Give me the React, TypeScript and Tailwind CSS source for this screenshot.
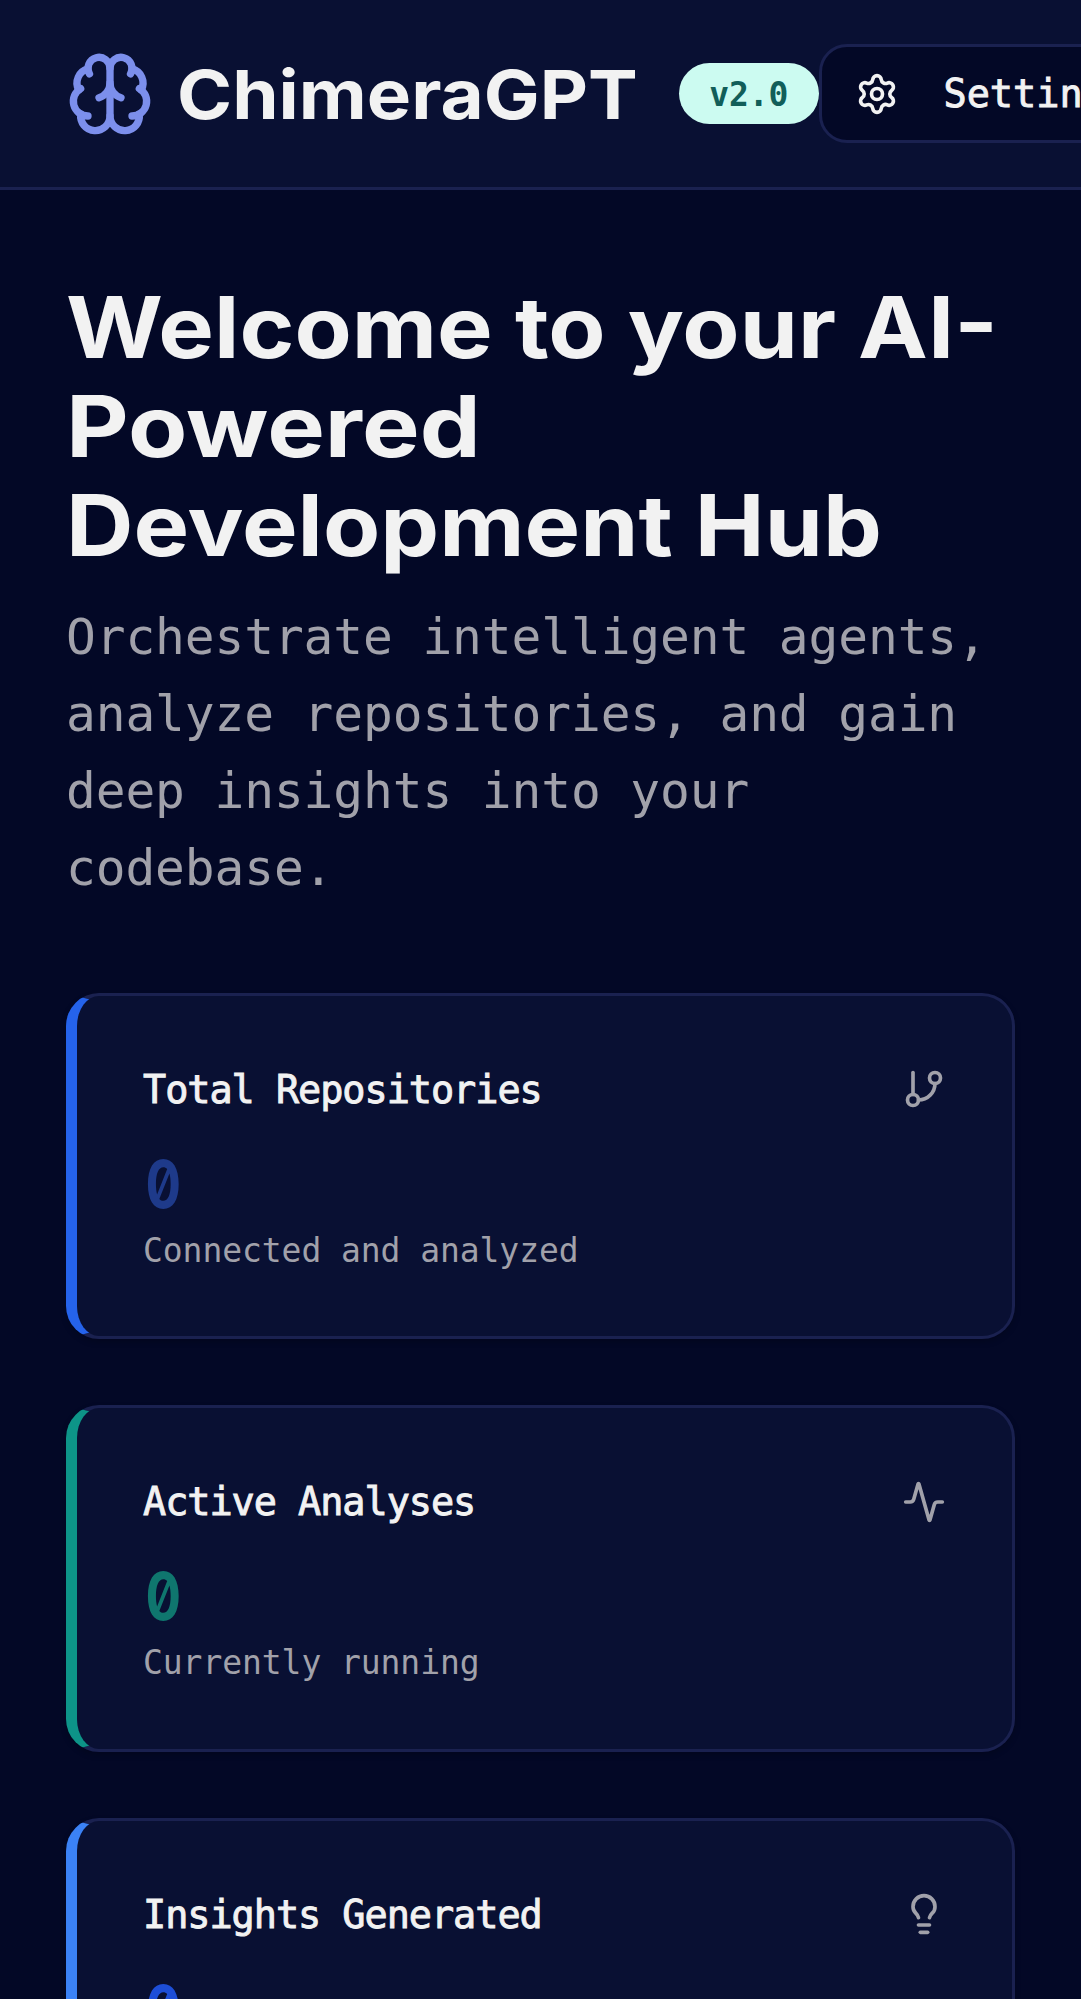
import { Activity, Brain, GitBranch, Lightbulb, Settings } from "lucide-react";
import type { LucideIcon } from "lucide-react";

type Stat = {
  title: string;
  value: string;
  note: string;
  icon: LucideIcon;
  edge: string;
  tone: string;
};

const stats: Stat[] = [
  {
    title: "Total Repositories",
    value: "0",
    note: "Connected and analyzed",
    icon: GitBranch,
    edge: "border-l-[#2563eb]",
    tone: "text-[#1e3a8a]",
  },
  {
    title: "Active Analyses",
    value: "0",
    note: "Currently running",
    icon: Activity,
    edge: "border-l-[#0d9488]",
    tone: "text-[#0f766e]",
  },
  {
    title: "Insights Generated",
    value: "0",
    note: "",
    icon: Lightbulb,
    edge: "border-l-[#3b82f6]",
    tone: "text-[#1d4ed8]",
  },
];

function StatCard({ title, value, note, icon: Icon, edge, tone }: Stat) {
  return (
    <section
      className={`h-[346.5px] shrink-0 rounded-[33px] border-3 border-l-[11px] border-[#1a2150] bg-[#091033] p-[66px] shadow-[0_3px_6px_rgba(0,0,0,0.2)] ${edge}`}
    >
      <div className="flex h-[55px] items-center justify-between">
        <h3 className="text-[38.5px] leading-[55px] tracking-[-1.03px] text-[#f2f2f2] [-webkit-text-stroke:0.9px_#f2f2f2]">
          {title}
        </h3>
        <Icon className="size-[44px] text-[#a1a1aa]" strokeWidth={2} />
      </div>
      <div
        className={`mt-[23px] w-[46px] origin-left scale-x-[0.8] pl-[3px] font-['Inter',sans-serif] text-[66px] leading-[88px] font-bold [font-feature-settings:'zero'] ${tone}`}
      >
        {value}
      </div>
      <p className="mt-px text-[33px] leading-[44px] tracking-[-0.07px] text-[#a1a1aa]">{note}</p>
    </section>
  );
}

export default function App() {
  return (
    <div className="flex h-[1999px] w-[1081px] flex-col overflow-hidden bg-[#030826] font-['DejaVu_Sans_Mono',monospace]">
      <header className="flex h-[190px] shrink-0 items-center border-b-3 border-[#1a2150] bg-[#091033] pl-[66px]">
        <Brain className="size-[88px] shrink-0 text-[#7c8fec]" strokeWidth={2} />
        <h1 className="ml-[23px] w-[459px] shrink-0 origin-left scale-x-[1.096] font-['Inter',sans-serif] text-[68px] leading-[88px] font-[650] whitespace-nowrap text-[#f2f2f2]">
          ChimeraGPT
        </h1>
        <span className="ml-[43px] flex h-[60.5px] w-[139.5px] shrink-0 items-center justify-center rounded-full bg-[#ccfbf1] pt-0.5 text-[33px] font-bold tracking-[-0.07px] text-[#115e59]">
          v2.0
        </span>
        <button className="flex h-[99px] w-[350px] shrink-0 items-center rounded-[28px] border-3 border-[#1a2150] bg-[#030826] pl-[33px] text-[38.5px] whitespace-nowrap text-[#f2f2f2]">
          <Settings className="mr-[45px] size-[44px] shrink-0" strokeWidth={2} />
          <span className="pt-px [-webkit-text-stroke:0.9px_#f2f2f2]">Settings</span>
        </button>
      </header>

      <main className="flex flex-col px-[66px] pt-[88px]">
        <h2 className="font-['Inter',sans-serif] text-[85px] leading-[99px] font-[650] whitespace-nowrap text-[#f2f2f2]">
          <span className="block origin-left scale-x-[1.1]">Welcome to your AI-</span>
          <span className="block origin-left scale-x-[1.14]">Powered</span>
          <span className="block origin-left scale-x-[1.1]">Development Hub</span>
        </h2>
        <p className="mt-[24px] text-[49.5px] leading-[77px] tracking-[-0.1px] whitespace-nowrap text-[#a1a1aa]">
          Orchestrate intelligent agents,
          <br />
          analyze repositories, and gain
          <br />
          deep insights into your
          <br />
          codebase.
        </p>
        <div className="mt-[85.5px] flex flex-col gap-[66px]">
          {stats.map((stat) => (
            <StatCard key={stat.title} {...stat} />
          ))}
        </div>
      </main>
    </div>
  );
}
